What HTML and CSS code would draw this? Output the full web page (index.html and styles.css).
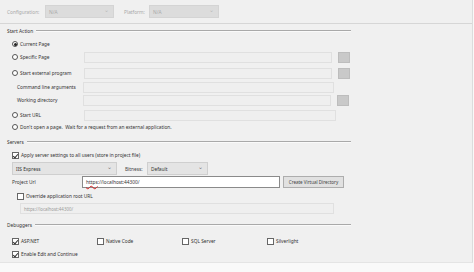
FILE: index.html
```html
<!DOCTYPE html>
<html lang="en">
<head>
    <meta charset="UTF-8">
    <title>Web Properties</title>
    <link rel="stylesheet" href="styles.css">
</head>
<body>
    <div class="panel">
        <div class="topbar">
            <span class="dim cfg-label">Configuration:</span>
            <div class="combo off cfg-combo"><span>N/A</span><span class="arrow">&#8964;</span></div>
            <span class="dim plat-label">Platform:</span>
            <div class="combo off plat-combo"><span>N/A</span><span class="arrow">&#8964;</span></div>
        </div>

        <div class="content">
            <div class="group-title first"><span>Start Action</span><i></i></div>

            <div class="row r-current">
                <span class="radio on"></span><span class="lbl">Current Page</span>
            </div>
            <div class="row r-specific">
                <span class="radio"></span><span class="lbl opt">Specific Page</span>
                <div class="box w248"></div><div class="browse"></div>
            </div>
            <div class="row r-external">
                <span class="radio"></span><span class="lbl opt">Start external program</span>
                <div class="box w248"></div><div class="browse"></div>
            </div>
            <div class="row r-cmd">
                <span class="lbl sub">Command line arguments</span>
                <div class="box w251"></div>
            </div>
            <div class="row r-work">
                <span class="lbl sub">Working directory</span>
                <div class="box w248"></div><div class="browse"></div>
            </div>
            <div class="row r-url">
                <span class="radio"></span><span class="lbl opt">Start URL</span>
                <div class="box w252"></div>
            </div>
            <div class="row r-dont">
                <span class="radio"></span><span class="lbl">Don't open a page.&nbsp; Wait for a request from an external application.</span>
            </div>

            <div class="group-title servers"><span>Servers</span><i></i></div>

            <div class="row r-apply">
                <span class="check on"></span><span class="lbl">Apply server settings to all users (store in project file)</span>
            </div>
            <div class="row r-iis">
                <div class="combo iis"><span>IIS Express</span><span class="arrow">&#8964;</span></div>
                <span class="bitness">Bitness:</span>
                <div class="combo bits"><span>Default</span><span class="arrow">&#8964;</span></div>
            </div>
            <div class="row r-project">
                <span class="proj-label">Project Url</span>
                <div class="urlbox"><span class="typo">https</span>://localhost:44300/</div>
                <button class="vdir">Create Virtual Directory</button>
            </div>
            <div class="row r-override">
                <span class="check"></span><span class="lbl">Override application root URL</span>
            </div>
            <div class="row r-root">
                <div class="box rootbox">https://localhost:44300/</div>
            </div>

            <div class="group-title debuggers"><span>Debuggers</span><i></i></div>

            <div class="row r-dbg">
                <div class="dbg"><span class="check on"></span><span class="lbl">ASP.NET</span></div>
                <div class="dbg"><span class="check"></span><span class="lbl">Native Code</span></div>
                <div class="dbg"><span class="check"></span><span class="lbl">SQL Server</span></div>
                <div class="dbg"><span class="check"></span><span class="lbl">Silverlight</span></div>
            </div>
            <div class="row r-enc">
                <span class="check on"></span><span class="lbl">Enable Edit and Continue</span>
            </div>
        </div>
    </div>
</body>
</html>
```

FILE: styles.css
```css
* {
    box-sizing: border-box;
    margin: 0;
    padding: 0;
}

body {
    width: 474px;
    height: 272px;
    background: #f9f9f9;
    font-family: 'Noto Sans', 'Open Sans', sans-serif;
    font-size: 4.8px;
    color: #333;
    overflow: hidden;
}

.panel {
    width: 473px;
    height: 263px;
    background: #f0f0f0;
    border-right: 1px solid #dcdcdc;
    border-bottom: 1px solid #e4e4e4;
}

.topbar {
    height: 24px;
    display: flex;
    align-items: center;
    padding-left: 7px;
    border-bottom: 1px solid #d6d6d6;
}

.dim {
    color: #a8a8a8;
}

.cfg-label {
    width: 38px;
}

.plat-label {
    width: 25px;
    margin-left: 10px;
}

.combo {
    height: 13px;
    display: flex;
    align-items: center;
    justify-content: space-between;
    padding: 0 4px 0 3px;
    background: #e4e4e4;
    border: 1px solid #cfcfcf;
}

.combo .arrow {
    font-size: 6px;
    line-height: 6px;
    margin-top: -3px;
    color: #777;
}

.combo.off {
    background: #dcdcdc;
    border-color: #d4d4d4;
    color: #a9a9a9;
}

.combo.off .arrow {
    color: #b8b8b8;
}

.cfg-combo {
    width: 69px;
}

.plat-combo {
    width: 70px;
}

.content {
    display: flex;
    flex-direction: column;
}

.group-title {
    height: 12px;
    display: flex;
    align-items: center;
    padding-left: 7px;
    width: 351px;
    color: #333;
}

.group-title i {
    flex: 1;
    height: 2px;
    margin-left: 3px;
    border-top: 1px solid #a9a9a9;
    border-bottom: 1px solid #fafafa;
}

.group-title.first {
    margin-top: 1px;
}

.servers {
    margin-top: 3px;
}

.debuggers {
    margin-top: 5px;
}

.row {
    height: 12px;
    display: flex;
    align-items: center;
    padding-left: 12px;
}

.r-current { margin-top: 1px; }
.r-specific { margin-top: 1px; }
.r-external { margin-top: 4px; }
.r-cmd { margin-top: 2px; }
.r-work { margin-top: 1px; }
.r-url { margin-top: 3px; }
.r-dont { margin-top: 0; }
.r-apply { margin-top: 1px; }
.r-iis { margin-top: 1px; height: 13px; }
.r-project { margin-top: 1px; }
.r-override { margin-top: 2px; padding-left: 17px; }
.r-root { margin-top: 1px; padding-left: 20px; height: 11px; }
.r-dbg { margin-top: 4px; }
.r-enc { margin-top: 1px; }

.radio {
    width: 6px;
    height: 6px;
    border: 1px solid #555;
    border-radius: 50%;
    background: #fff;
    display: flex;
    align-items: center;
    justify-content: center;
}

.radio.on::after {
    content: "";
    width: 3px;
    height: 3px;
    border-radius: 50%;
    background: #222;
}

.check {
    width: 7px;
    height: 7px;
    border: 1px solid #666;
    background: #fff;
    position: relative;
}

.check.on::after {
    content: "";
    position: absolute;
    left: 1px;
    top: 0;
    width: 2px;
    height: 4px;
    border-right: 1px solid #333;
    border-bottom: 1px solid #333;
    transform: rotate(40deg);
}

.lbl {
    margin-left: 2px;
    white-space: nowrap;
}

.lbl.opt {
    width: 64px;
}

.lbl.sub {
    margin-left: 5px;
    width: 66px;
}

.box {
    height: 11px;
    background: #efefef;
    border: 1px solid #e0e0e0;
}

.w248 { width: 248px; }
.w251 { width: 251px; }
.w252 { width: 252px; }

.browse {
    width: 12px;
    height: 11px;
    margin-left: 6px;
    background: #c9c9c9;
    border: 1px solid #bdbdbd;
}

.iis {
    width: 105px;
}

.bitness {
    margin-left: 8px;
    width: 22px;
    color: #444;
}

.bits {
    width: 61px;
}

.proj-label {
    width: 70px;
}

.urlbox {
    width: 198px;
    height: 12px;
    background: #fff;
    border: 1px solid #8a8a8a;
    padding-left: 3px;
    display: flex;
    align-items: center;
    color: #333;
}

.typo {
    text-decoration: underline wavy #d42020;
    text-decoration-thickness: 1px;
}

.vdir {
    width: 61px;
    height: 12px;
    margin-left: 3px;
    background: #e1e1e1;
    border: 1px solid #adadad;
    font-family: inherit;
    font-size: 4.5px;
    color: #444;
}

.rootbox {
    width: 314px;
    height: 11px;
    display: flex;
    align-items: center;
    padding-left: 3px;
    color: #9a9a9a;
    font-size: 4.4px;
}

.dbg {
    width: 85px;
    display: flex;
    align-items: center;
}
```
